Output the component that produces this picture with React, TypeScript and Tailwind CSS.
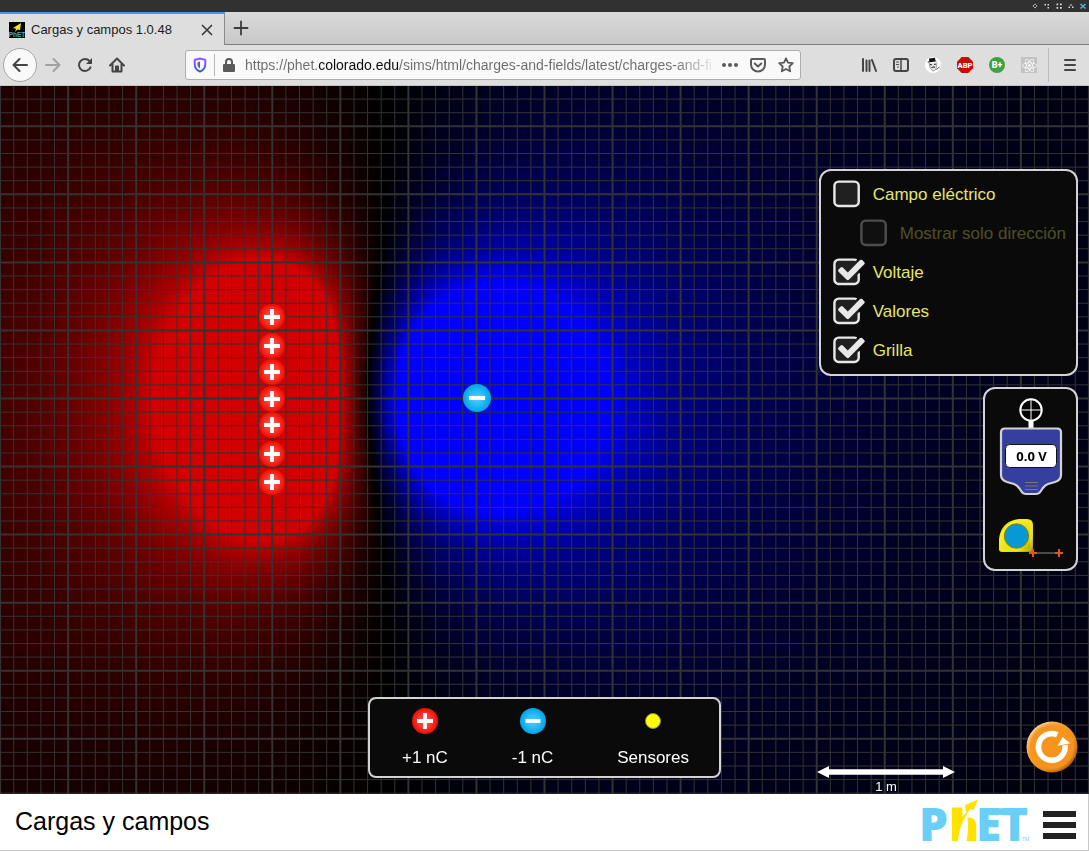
import { useLayoutEffect, useRef, useState } from "react";
import type { ReactNode } from "react";
import { FaReact } from "react-icons/fa";

const METRE = 136.1;
const ORIGIN_Y = 312;
const K = 9;
const SATURATION = 40;

type Charge = { x: number; y: number; q: number };

const CHARGES: Charge[] = [
  { x: -2, y: 0.597, q: 1 },
  { x: -2, y: 0.384, q: 1 },
  { x: -2, y: 0.191, q: 1 },
  { x: -2, y: -0.005, q: 1 },
  { x: -2, y: -0.196, q: 1 },
  { x: -2, y: -0.409, q: 1 },
  { x: -2, y: -0.615, q: 1 },
  { x: -0.496, y: 0, q: -7 },
];

function paintField(canvas: HTMLCanvasElement) {
  const width = canvas.clientWidth;
  const height = canvas.clientHeight;
  const ctx = canvas.getContext("2d");
  if (!ctx || width === 0 || height === 0) return;
  canvas.width = width;
  canvas.height = height;
  const originX = width / 2;
  const image = ctx.createImageData(width, height);
  for (let py = 0; py < height; py++) {
    for (let px = 0; px < width; px++) {
      const mx = (px + 0.5 - originX) / METRE;
      const my = (ORIGIN_Y - py - 0.5) / METRE;
      let volts = 0;
      for (const c of CHARGES) {
        volts += (K * c.q) / Math.max(0.001, Math.hypot(mx - c.x, my - c.y));
      }
      const level = Math.min(1, Math.abs(volts) / SATURATION);
      const i = (py * width + px) * 4;
      image.data[i] = volts > 0 ? 210 * level : 0;
      image.data[i + 1] = 0;
      image.data[i + 2] = volts < 0 ? 255 * level : 0;
      image.data[i + 3] = 255;
    }
  }
  ctx.putImageData(image, 0, 0);

  ctx.strokeStyle = "#333333";
  const step = METRE / 10;
  const line = (x1: number, y1: number, x2: number, y2: number, major: boolean) => {
    ctx.lineWidth = major ? 2 : 1;
    ctx.beginPath();
    ctx.moveTo(x1, y1);
    ctx.lineTo(x2, y2);
    ctx.stroke();
  };
  const columns = Math.ceil(originX / step);
  for (let n = -columns; n <= columns; n++) {
    const x = originX + n * step;
    line(x, 0, x, height, n % 5 === 0);
  }
  const rows = Math.ceil(height / step);
  for (let n = -rows; n <= rows; n++) {
    const y = ORIGIN_Y + 0.5 + n * step;
    line(0, y, width, y, n % 5 === 0);
  }
}

function FieldCanvas() {
  const ref = useRef<HTMLCanvasElement>(null);
  useLayoutEffect(() => {
    const canvas = ref.current;
    if (!canvas) return;
    paintField(canvas);
    const redraw = () => paintField(canvas);
    window.addEventListener("resize", redraw);
    return () => window.removeEventListener("resize", redraw);
  }, []);
  return <canvas ref={ref} className="absolute inset-0 h-full w-full" />;
}

function ChargeBall({ positive, className }: { positive: boolean; className: string }) {
  const id = positive ? "ball-positive" : "ball-negative";
  return (
    <svg viewBox="0 0 26 26" className={className} aria-hidden="true">
      <defs>
        <radialGradient id={id}>
          <stop offset="0" stopColor={positive ? "#ff5149" : "#4fcfff"} />
          <stop offset="0.5" stopColor={positive ? "#ff3a33" : "#2cbcf7"} />
          <stop offset="1" stopColor={positive ? "#e90e00" : "#00a4e6"} />
        </radialGradient>
      </defs>
      <circle cx="13" cy="13" r="13" fill={`url(#${id})`} />
      <path d={positive ? "M5 13h16M13 5v16" : "M5.500 13h15"} stroke="#fff" strokeWidth="3.800" />
    </svg>
  );
}

function ToolButton({ label, className = "", children }: { label: string; className?: string; children: ReactNode }) {
  return (
    <button type="button" aria-label={label} className={`flex h-8 w-8 shrink-0 items-center justify-center ${className}`}>
      {children}
    </button>
  );
}

const line = { fill: "none", stroke: "currentColor", strokeWidth: 2, strokeLinecap: "round", strokeLinejoin: "round" } as const;

function TitleBar() {
  return (
    <div className="flex h-3 items-center justify-end bg-[#313131]">
      <svg viewBox="0 0 60 12" className="h-3 w-[60px]" fill="#dcdcdc" aria-hidden="true">
        <path d="M6 3.500l1 1.500h-2zM6 8.500l1-1.500h-2zM3.500 6l1.500-1v2zM8.500 6l-1.500-1v2z" />
        <path d="M15.500 4h1.500v1.500h-1.500zM18.500 4h1.500v1.500h-1.500zM18.500 7h1.500v1.500h-1.500z" />
        <path d="M27.500 3.500h1.700v1.700h-1.700zM31 3.500h1.700v1.700H31zM27.500 7h1.700v1.700h-1.700zM31 7h1.700v1.700H31z" />
        <path d="M42 4l1.500 1.500h-3zM39.500 6.500h1.500v1.500h-1.500zM43 6.500h1.500v1.500H43z" />
        <path d="M51.500 4l5 4.500M56.500 4l-5 4.500" stroke="#4fb3d3" strokeWidth="1.500" />
      </svg>
    </div>
  );
}

function TabStrip() {
  return (
    <div className="flex h-[33px] bg-linear-to-b from-[#d9d9d9] to-[#c8c8c8]">
      <div className="flex w-[225px] items-center border-t-2 border-r border-t-[#3b99fc] border-r-[#8a8a8a] bg-[#dedede] pr-[7px] pl-[9px]">
        <svg viewBox="0 0 16 16" className="h-4 w-4 shrink-0" aria-hidden="true">
          <path d="M0 0h16v16H0z" fill="#000" />
          <path d="M12 1L4 6l3 .8L6 10l2.500-2.500L11 8z" fill="#f4e225" />
          <text x="8" y="15" textAnchor="middle" fontFamily="Liberation Sans" fontWeight="700" fontSize="6.500" fill="#4aa8d8">
            PhET
          </text>
        </svg>
        <span className="ml-1.5 flex-1 truncate text-[13px] text-[#1c1c1c]">Cargas y campos 1.0.48</span>
        <button type="button" aria-label="Cerrar pestaña" className="flex h-6 w-5 items-center justify-center text-[#3c3c3c]">
          <svg viewBox="0 0 16 16" className="h-4 w-4" {...line} strokeWidth={1.7}>
            <path d="M3.500 3.500l9 9M12.500 3.500l-9 9" />
          </svg>
        </button>
      </div>
      <div className="flex flex-1 items-center border-b border-[#7d7d7d]">
        <ToolButton label="Nueva pestaña" className="text-[#3c3c3c]">
          <svg viewBox="0 0 16 16" className="h-4 w-4" {...line} strokeWidth={1.8}>
            <path d="M8 1.500v13M1.500 8h13" />
          </svg>
        </ToolButton>
      </div>
    </div>
  );
}

function Extensions() {
  return (
    <>
      <ToolButton label="Biblioteca">
        <svg viewBox="0 0 16 16" className="h-4 w-4" {...line}>
          <path d="M2 2v12M5.500 3.500V14M8.500 3.500V14M11 3l4 11" />
        </svg>
      </ToolButton>
      <ToolButton label="Barra lateral">
        <svg viewBox="0 0 16 16" className="h-4 w-4" {...line}>
          <rect x="1" y="2" width="14" height="12" rx="2" />
          <path d="M8 2v12" strokeWidth="1.500" />
          <path d="M3.500 5H5.500M3.500 7.500H5.500M4.500 10H5.500" strokeWidth="1" />
        </svg>
      </ToolButton>
      <ToolButton label="Identidad">
        <svg viewBox="0 0 16 16" className="h-4 w-4">
          <circle cx="8" cy="8" r="8" fill="#fff" />
          <path d="M4 1.500l6-.7.400 2.800L12 4.200l-8.500 1.300-1.500-.5 2.300-.8z" fill="#111" />
          <path d="M4 5.700l1 5 3 3.500 3-2 1-6.500" fill="#e6e6e6" stroke="#777" strokeWidth=".7" />
          <path d="M5 7.500l2 .3M9 7.500l2-.5M6.500 10.500l2-.6 1.500.3" stroke="#222" strokeWidth="1" />
          <path d="M11.500 12.500l3-2.500" stroke="#555" strokeWidth="1" />
        </svg>
      </ToolButton>
      <ToolButton label="Bloqueador">
        <svg viewBox="0 0 16 16" className="h-4 w-4">
          <path d="M4.700 0h6.600L16 4.700v6.600L11.300 16H4.700L0 11.300V4.700z" fill="#c70d00" />
          <text x="8" y="10.600" textAnchor="middle" fontFamily="Roboto, sans-serif" fontWeight="900" fontSize="7.500" fill="#fff">
            ABP
          </text>
        </svg>
      </ToolButton>
      <ToolButton label="Complemento B+">
        <svg viewBox="0 0 16 16" className="h-4 w-4">
          <circle cx="8" cy="8" r="8" fill="#3da143" />
          <text x="8" y="11.200" textAnchor="middle" fontFamily="Roboto, sans-serif" fontWeight="900" fontSize="9" fill="#fff">
            B+
          </text>
        </svg>
      </ToolButton>
      <ToolButton label="React">
        <span className="flex h-4 w-4 items-center justify-center bg-[#c3c3c3] text-white">
          <FaReact size={15} />
        </span>
      </ToolButton>
    </>
  );
}

function Toolbar() {
  return (
    <div className="flex h-[41px] items-center border-b border-[#c4c4c4] bg-[#dedede] px-[3px] text-[#454545]">
      <button
        type="button"
        aria-label="Atrás"
        className="flex h-[34px] w-[34px] shrink-0 items-center justify-center rounded-full border border-[#a5a5a5] bg-[#f9f9f9]"
      >
        <svg viewBox="0 0 16 16" className="h-4 w-4" {...line}>
          <path d="M15 8H1.500M7.500 2L1.500 8l6 6" />
        </svg>
      </button>
      <ToolButton label="Adelante" className="text-[#a0a0a0]">
        <svg viewBox="0 0 16 16" className="h-4 w-4" {...line}>
          <path d="M1 8h13.500M8.500 2l6 6-6 6" />
        </svg>
      </ToolButton>
      <ToolButton label="Recargar">
        <svg viewBox="0 0 16 16" className="h-4 w-4" {...line}>
          <path d="M13.500 10.300A6 6 0 1 1 12.500 4" />
          <path d="M15 1v6H9z" fill="currentColor" stroke="none" />
        </svg>
      </ToolButton>
      <ToolButton label="Inicio">
        <svg viewBox="0 0 16 16" className="h-4 w-4" {...line}>
          <path d="M1 8.500l7-7 7 7M3.500 7.500v7h9v-7" />
          <path d="M6.500 14V9h3v5z" fill="currentColor" strokeWidth="1" />
        </svg>
      </ToolButton>
      <div className="ml-[52px] flex h-[30px] max-w-[616px] min-w-0 flex-1 items-center rounded-[3px] border border-[#adadad] bg-[#f9f9f9] pl-1.5 text-[#5a5a5a]">
        <svg viewBox="0 0 16 16" className="h-4 w-4 shrink-0" aria-hidden="true">
          <defs>
            <linearGradient id="shield" x2="0" y2="1">
              <stop offset="0" stopColor="#9059ff" />
              <stop offset="1" stopColor="#2a5bd7" />
            </linearGradient>
          </defs>
          <path
            d="M8 1.500q2.500 1 5.300 1.200v4.500c0 3.500-2 6-5.300 7.400-3.300-1.400-5.300-3.900-5.300-7.400V2.700Q5.500 2.500 8 1.500z"
            fill="none"
            stroke="url(#shield)"
            strokeWidth="1.900"
            strokeLinejoin="round"
          />
          <path d="M8 4.500v7c-1.500-1-2.500-2.200-2.500-3.800V5.200z" fill="#5a55e8" />
        </svg>
        <span className="mx-1.5 h-[22px] w-px shrink-0 bg-[#b5b5b5]" />
        <svg viewBox="0 0 16 16" className="h-4 w-4 shrink-0" aria-hidden="true">
          <rect x="2" y="7" width="12" height="8" rx="1" fill="currentColor" />
          <path d="M5 8V5a3 3 0 0 1 6 0v3" fill="none" stroke="currentColor" strokeWidth="2" />
        </svg>
        <input
          type="text"
          aria-label="Dirección"
          defaultValue="https://phet.colorado.edu/sims/html/charges-and-fields/latest/charges-and-fields_es.html"
          className="ml-2 h-7 min-w-0 flex-1 bg-[linear-gradient(to_right,#6c6c6c_73px,#0c0c0d_73px,#0c0c0d_154px,#6c6c6c_154px,#6c6c6c_430px,#f9f9f9_472px)] bg-clip-text text-sm text-transparent caret-black outline-none"
        />
        <div className="mr-1.5 ml-2.5 flex shrink-0 items-center gap-3">
          <button type="button" aria-label="Acciones de página">
            <svg viewBox="0 0 16 16" className="block h-4 w-4" fill="currentColor">
              <circle cx="2" cy="8" r="2" />
              <circle cx="8" cy="8" r="2" />
              <circle cx="14" cy="8" r="2" />
            </svg>
          </button>
          <button type="button" aria-label="Guardar en Pocket">
            <svg viewBox="0 0 16 16" className="block h-4 w-4" {...line}>
              <path d="M2 2h12a1 1 0 0 1 1 1v4.500a7 7 0 0 1-14 0V3a1 1 0 0 1 1-1z" />
              <path d="M4.700 6.500L8 9.500l3.300-3" />
            </svg>
          </button>
          <button type="button" aria-label="Añadir a marcadores">
            <svg viewBox="0 0 16 16" className="block h-4 w-4" {...line} strokeWidth={1.800}>
              <path d="M8 1.300l2 4.300 4.800.6-3.500 3.300.9 4.800L8 12l-4.200 2.300.9-4.800L1.200 6.200 6 5.600z" />
            </svg>
          </button>
        </div>
      </div>
      <div className="ml-auto flex items-center">
        <Extensions />
        <span className="mr-[5px] ml-[3px] h-[34px] w-px bg-[#bcbcbc]" />
        <ToolButton label="Menú del navegador">
          <svg viewBox="0 0 16 16" className="h-4 w-4" {...line}>
            <path d="M3 3h10M3 8h10M3 13h10" />
          </svg>
        </ToolButton>
      </div>
    </div>
  );
}

function Option({ label, initial = false, disabled = false }: { label: string; initial?: boolean; disabled?: boolean }) {
  const [checked, setChecked] = useState(initial);
  return (
    <label className={`flex h-[39px] items-center text-[17px] text-[#e6e66e] ${disabled ? "pl-[27px] opacity-30" : ""}`}>
      <span className="relative mr-[7px] h-[34px] w-[34px]">
        <input
          type="checkbox"
          checked={checked}
          disabled={disabled}
          onChange={(e) => setChecked(e.target.checked)}
          className="absolute inset-0 h-full w-full appearance-none"
        />
        <svg viewBox="0 0 1792 1792" className="pointer-events-none absolute inset-0 h-full w-full" fill="#e8e8e8" aria-hidden="true">
          <rect x="128" y="192" width="1280" height="1280" rx="220" fill="#202020" stroke={checked ? "none" : "#e8e8e8"} strokeWidth="128" />
          {checked && (
            <path d="M1472 930v318q0 119-84.500 203.500t-203.500 84.500h-832q-119 0-203.500-84.500t-84.500-203.500v-832q0-119 84.500-203.500t203.500-84.500h832q63 0 117 25 15 7 18 23 3 17-9 29l-49 49q-10 10-23 10-3 0-9-2-23-6-45-6h-832q-66 0-113 47t-47 113v832q0 66 47 113t113 47h832q66 0 113-47t47-113v-254q0-13 9-22l64-64q10-10 23-10 6 0 12 3 20 8 20 29zm231-489l-814 814q-24 24-57 24t-57-24l-430-430q-24-24-24-57t24-57l110-110q24-24 57-24t57 24l263 263 647-647q24-24 57-24t57 24l110 110q24 24 24 57t-24 57z" />
          )}
        </svg>
      </span>
      {label}
    </label>
  );
}

function VoltageMeter() {
  return (
    <svg viewBox="0 0 64 98" className="h-[98px] w-16" role="img" aria-label="Voltímetro">
      <path d="M32 22v8" stroke="#fff" strokeWidth="5" />
      <circle cx="32" cy="12" r="10.700" fill="#000" stroke="#fff" strokeWidth="2" />
      <path d="M21.500 12h21M32 1.500v21" stroke="#fff" strokeWidth="1" />
      <path
        d="M6 30.500H58Q62 30.500 62 34.500V77Q62 82 56 84L49 86Q46 87 43.500 90.500L41.500 93.500Q40 96 37 96H27Q24 96 22.500 93.500L20.500 90.500Q18 87 15 86L8 84Q2 82 2 77V34.500Q2 30.500 6 30.500Z"
        fill="#343f9e"
        stroke="#d3d3d3"
        strokeWidth="2.200"
      />
      <rect x="6.500" y="46.500" width="51" height="23" rx="4" fill="#fff" stroke="#111" strokeWidth="1" />
      <text x="32.500" y="62.500" textAnchor="middle" className="font-['Open_Sans',sans-serif] text-[13px] font-bold" fill="#000">
        0.0 V
      </text>
      <path d="M26 84.500h13M26 88h13M26 91.500h13" stroke="#777" strokeWidth="1.200" />
    </svg>
  );
}

function TapeMeasure() {
  return (
    <svg viewBox="0 0 66 40" className="h-10 w-[66px]" role="img" aria-label="Cinta métrica">
      <defs>
        <linearGradient id="tape" x2="1" y2="1">
          <stop offset="0" stopColor="#a9a100" />
          <stop offset="0.250" stopColor="#f5ee22" />
          <stop offset="0.750" stopColor="#e3da0a" />
          <stop offset="1" stopColor="#8f8800" />
        </linearGradient>
      </defs>
      <path d="M20 1h8q6 0 6 6v27H3q-3 0-3-3V21Q2 3 20 1z" fill="url(#tape)" />
      <path d="M20 3h7q5 0 5 5v22q0 2-2 2H4q-2 0-2-2V21Q4 5 20 3z" fill="none" stroke="#fff75a" strokeOpacity=".5" />
      <circle cx="17.500" cy="18" r="12.200" fill="#0798d6" stroke="#8c8500" />
      <path d="M34 35h27" stroke="#8a8a8a" strokeWidth="1" />
      <path d="M30 35h8M34 31v8M56 35h8M60 31v8" stroke="#e0561f" strokeWidth="2" />
    </svg>
  );
}

const panel = "border-2 border-[#d3d3d3] bg-[#0a0a0a]";

function ResetButton() {
  return (
    <button type="button" aria-label="Reiniciar todo" className="absolute right-[11px] bottom-[21px] h-[52px] w-[52px] rounded-full">
      <svg viewBox="0 0 52 52" className="block h-full w-full">
        <defs>
          <linearGradient id="rim" x1="0.150" y1="0.150" x2="0.850" y2="0.850">
            <stop offset="0" stopColor="#fddcb4" />
            <stop offset="0.300" stopColor="#f9a43e" />
            <stop offset="0.700" stopColor="#e78516" />
            <stop offset="1" stopColor="#9c5508" />
          </linearGradient>
          <radialGradient id="face">
            <stop offset="0.820" stopColor="#f7941d" />
            <stop offset="1" stopColor="#f7941d" stopOpacity="0" />
          </radialGradient>
        </defs>
        <circle cx="26" cy="26" r="25.500" fill="url(#rim)" />
        <circle cx="26" cy="26" r="25.500" fill="url(#face)" />
        <path d="M31.200 13.900A13.300 13.300 0 1 0 38.900 24" fill="none" stroke="#fff" strokeWidth="5.600" />
        <path d="M31.800 24.700l4.700-8.700 7.700 6.300z" fill="#fff" />
      </svg>
    </button>
  );
}

function Simulation() {
  return (
    <main className="relative min-h-[708px] flex-1 overflow-hidden bg-black text-white">
      <FieldCanvas />
      {CHARGES.map((c, i) => (
        <button
          key={i}
          type="button"
          aria-label={c.q > 0 ? "Carga positiva" : "Carga negativa"}
          className="absolute -translate-x-1/2 -translate-y-1/2"
          style={{ left: `calc(50% + ${c.x * METRE}px)`, top: ORIGIN_Y - c.y * METRE }}
        >
          <ChargeBall positive={c.q > 0} className={c.q > 0 ? "block h-[26px] w-[26px]" : "block h-7 w-7"} />
        </button>
      ))}

      <div className="absolute top-[83px] right-[11px] flex flex-col items-end gap-[11px]">
        <section className={`${panel} rounded-xl py-1 pr-2.5 pl-[11px]`}>
          <Option label="Campo eléctrico" />
          <Option label="Mostrar solo dirección" disabled />
          <Option label="Voltaje" initial />
          <Option label="Valores" initial />
          <Option label="Grilla" initial />
        </section>
        <section className={`${panel} flex w-[95px] flex-col gap-[22px] rounded-xl pt-[9px] pb-[11px] pl-[14px]`}>
          <VoltageMeter />
          <TapeMeasure />
        </section>
      </div>

      <section
        className={`${panel} absolute inset-x-0 bottom-4 mx-auto flex h-[81px] w-[353px] justify-between rounded-lg pt-[9px] pr-[30px] pl-8 text-[17px]`}
      >
        <button type="button" className="flex flex-col items-center gap-[11px]">
          <ChargeBall positive className="h-[26px] w-[26px]" />
          +1 nC
        </button>
        <button type="button" className="flex flex-col items-center gap-[11px]">
          <ChargeBall positive={false} className="h-[26px] w-[26px]" />
          -1 nC
        </button>
        <button type="button" className="flex flex-col items-center gap-[11px]">
          <span className="flex h-[26px] items-center">
            <span className="h-4 w-4 rounded-full border border-[#8a8a5a] bg-[#ffff00]" />
          </span>
          Sensores
        </button>
      </section>

      <div className="absolute right-[134px] bottom-0 flex flex-col items-center">
        <svg viewBox="0 0 138 14" className="h-3.5 w-[138px]" aria-hidden="true">
          <path d="M0 7L12 1v3.200h114V1l12 6-12 6V9.800H12V13z" fill="#fff" />
        </svg>
        <span className="text-[13px] leading-[15px]">1 m</span>
      </div>

      <ResetButton />
    </main>
  );
}

function PhetLogo() {
  return (
    <svg viewBox="0 0 108 46" className="h-[46px] w-[108px]" role="img" aria-label="PhET">
      <g className="font-['Open_Sans',sans-serif] text-[46px] font-extrabold" fill="#6acff6">
        <text x="-3" y="42">P</text>
        <text x="54" y="42">E</text>
        <text x="79" y="42">T</text>
      </g>
      <path d="M74 9.300h10v6.500H74z" fill="#6acff6" />
      <path d="M30 8.500h10.500V18q2-3 5-5.500l-1.500.5-1-7L56 .5 51.500 11.500 48.500 9.800Q45 14 43 18.500 37 29 36 42H30z" fill="#ffe200" />
      <path d="M47 18.500q7 0 7.200 8V42H44.500q2.500-13 1-23z" fill="#ffe200" />
      <text x="100" y="42" fontFamily="Liberation Sans" fontSize="5" fill="#6acff6">
        TM
      </text>
    </svg>
  );
}

export default function App() {
  return (
    <div className="flex min-h-screen flex-col font-['Liberation_Sans',Arial,sans-serif]">
      <header>
        <TitleBar />
        <TabStrip />
        <Toolbar />
      </header>
      <Simulation />
      <footer className="flex h-[57px] items-center border-r border-b border-[#c8c8c8] bg-white pr-2 pl-[15px]">
        <h1 className="flex-1 text-[25px] text-black">Cargas y campos</h1>
        <a href="#phet">
          <PhetLogo />
        </a>
        <button type="button" aria-label="Menú" className="mr-px ml-[9px] flex h-10 w-10 flex-col items-center justify-center gap-[5px] pt-1.5">
          <span className="h-1.5 w-[33px] bg-[#222]" />
          <span className="h-1.5 w-[33px] bg-[#222]" />
          <span className="h-1.5 w-[33px] bg-[#222]" />
        </button>
      </footer>
    </div>
  );
}
